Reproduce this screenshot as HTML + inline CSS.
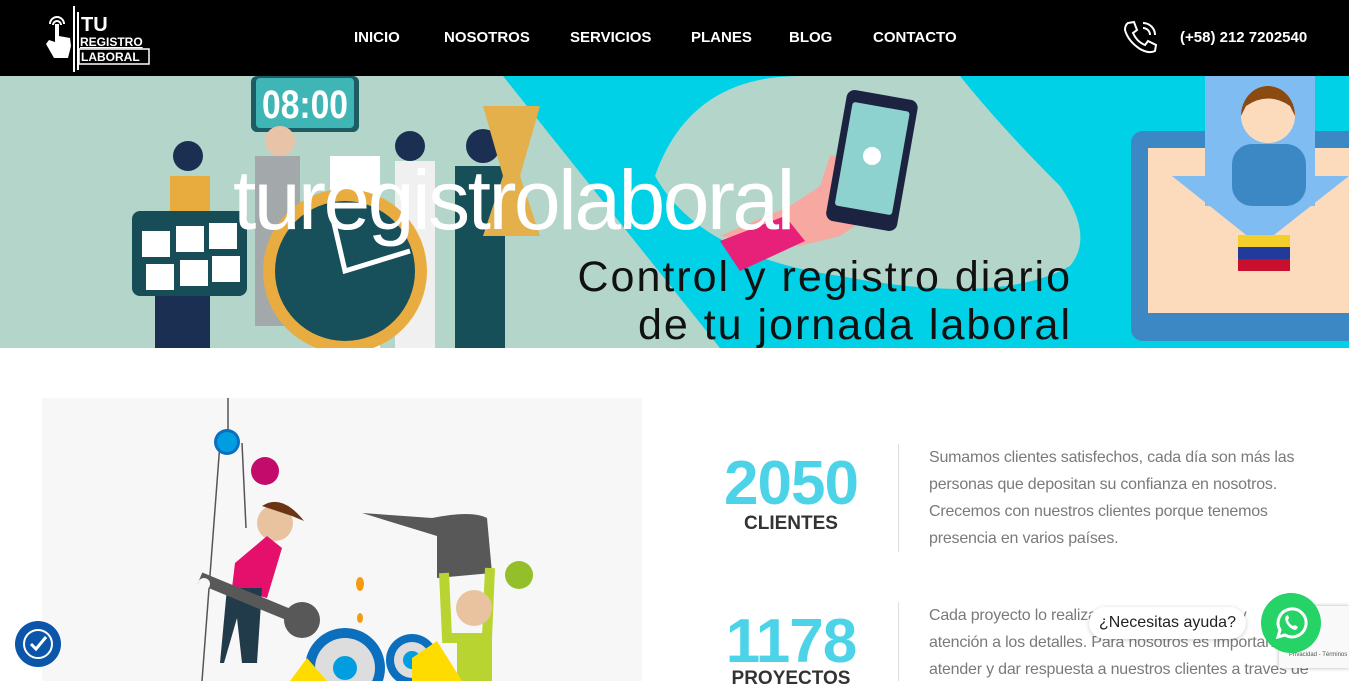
<!DOCTYPE html>
<html><head><meta charset="utf-8">
<style>
*{margin:0;padding:0;box-sizing:border-box}
body{width:1349px;height:681px;overflow:hidden;background:#fff;font-family:"Liberation Sans",sans-serif;position:relative}
.hdr{position:absolute;left:0;top:0;width:1349px;height:76px;background:#000}
.nav{position:absolute;top:29px;color:#fff;font-size:15px;font-weight:bold;letter-spacing:0}
.phone{position:absolute;left:1180px;top:29px;color:#fff;font-size:15px;font-weight:bold}
.banner{position:absolute;left:0;top:76px;width:1349px;height:272px;overflow:hidden;background:#b3d5ca}
.num{position:absolute;color:#4dd3e8;font-weight:bold;font-size:62px;text-align:center;width:200px;letter-spacing:-1px}
.lbl{position:absolute;color:#333;font-weight:bold;font-size:19px;text-align:center;width:200px}
.txt{position:absolute;left:929px;color:#7a7a7a;font-size:16px;line-height:27px;width:440px;white-space:nowrap;letter-spacing:-0.2px}
.vl{position:absolute;left:898px;width:1px;background:#ddd}
</style></head><body>
<div class="hdr">
 <svg style="position:absolute;left:44px;top:4px" width="110" height="70" viewBox="0 0 110 70">
  <path d="M6 20 a7 7 0 0 1 14 0" stroke="#fff" fill="none" stroke-width="2"/>
  <path d="M9 21 a4 4 0 0 1 8 0" stroke="#fff" fill="none" stroke-width="2"/>
  <path d="M11 20 L11 38 L5 36 L2 40 L10 54 L24 54 L27 42 L26 34 L15 32 L15 20 Z" fill="#fff"/>
  <rect x="29" y="2" width="2" height="66" fill="#fff"/>
  <rect x="33" y="8" width="2" height="58" fill="#fff"/>
  <text x="37" y="27" fill="#fff" font-weight="bold" font-size="20" font-family="Liberation Sans">TU</text>
  <text x="36" y="42" fill="#fff" font-weight="bold" font-size="12" font-family="Liberation Sans" text-decoration="underline">REGISTRO</text>
  <rect x="35" y="45" width="70" height="15" fill="none" stroke="#fff" stroke-width="1.5"/>
  <text x="37" y="57" fill="#fff" font-weight="bold" font-size="12" font-family="Liberation Sans">LABORAL</text>
 </svg>
 <div class="nav" style="left:354px">INICIO</div>
 <div class="nav" style="left:444px">NOSOTROS</div>
 <div class="nav" style="left:570px">SERVICIOS</div>
 <div class="nav" style="left:691px">PLANES</div>
 <div class="nav" style="left:789px">BLOG</div>
 <div class="nav" style="left:873px">CONTACTO</div>
 <svg style="position:absolute;left:1122px;top:19px" width="38" height="36" viewBox="0 0 38 36">
  <path d="M6 4 L12 3 L15 11 L11 14 Q15 23 23 26 L26 22 L34 26 L33 32 Q27 35 18 30 Q6 22 3 11 Q3 6 6 4Z" fill="none" stroke="#fff" stroke-width="2"/>
  <path d="M21 9 a7 7 0 0 1 7 7 M21 4 a12 12 0 0 1 12 12" fill="none" stroke="#fff" stroke-width="2"/>
 </svg>
 <div class="phone">(+58) 212 7202540</div>
</div>

<div class="banner">
 <svg width="1349" height="272" viewBox="0 0 1349 272" style="position:absolute;left:0;top:0">
  <polygon points="503,0 1349,0 1349,272 720,272" fill="#00d1e6"/>
  <path d="M655 100 Q690 0 800 0 L960 0 Q1000 50 1060 110 Q1095 160 1070 190 Q1000 230 840 200 Q700 180 655 100Z" fill="#b3d5ca"/>
  <rect x="251" y="0" width="108" height="56" rx="6" fill="#1e5c63"/>
  <rect x="256" y="2" width="98" height="50" rx="4" fill="#3fb6b5"/>
  <text x="262" y="42" fill="#fff" font-size="40" font-weight="bold" font-family="Liberation Sans" textLength="86" lengthAdjust="spacingAndGlyphs">08:00</text>
  <rect x="170" y="100" width="40" height="70" fill="#e7ab3e"/>
  <circle cx="188" cy="80" r="15" fill="#1b2f52"/>
  <rect x="155" y="190" width="55" height="82" fill="#1b2f52"/>
  <rect x="132" y="135" width="115" height="85" rx="8" fill="#174d56"/>
  <g fill="#fff"><rect x="142" y="155" width="28" height="26"/><rect x="176" y="150" width="28" height="26"/><rect x="209" y="147" width="28" height="26"/><rect x="146" y="188" width="28" height="26"/><rect x="180" y="184" width="28" height="26"/><rect x="212" y="180" width="28" height="26"/></g>
  <rect x="255" y="80" width="45" height="170" fill="#a3a9ab"/>
  <circle cx="280" cy="65" r="15" fill="#e9c3a7"/>
  <rect x="330" y="80" width="50" height="192" fill="#fff"/>
  <circle cx="410" cy="70" r="15" fill="#1b2f52"/>
  <rect x="395" y="85" width="40" height="187" fill="#f0f0f0"/>
  <rect x="455" y="90" width="50" height="182" fill="#164f58"/>
  <circle cx="483" cy="70" r="17" fill="#1b2f52"/>
  <path d="M483 30 L540 30 L520 100 L540 160 L483 160 L503 100Z" fill="#e4b04b"/>
  <circle cx="345" cy="195" r="82" fill="#e8ac40"/>
  <circle cx="345" cy="195" r="70" fill="#174f5a"/>
  <path d="M330 130 L345 195 L410 175" stroke="#fff" stroke-width="5" fill="none"/>
  <path d="M720 160 L790 130 L820 110 L830 80 L900 70 L900 120 L840 160 L800 170 Z" fill="#f7a8a0"/>
  <path d="M720 165 L785 140 L805 165 L740 195 Z" fill="#e7217a"/>
  <rect x="836" y="18" width="72" height="133" rx="8" transform="rotate(10 872 84)" fill="#1c2340"/>
  <rect x="843" y="30" width="58" height="105" rx="3" transform="rotate(10 872 84)" fill="#8ed2d0"/>
  <circle cx="872" cy="80" r="9" fill="#fff"/>
  <rect x="1131" y="55" width="230" height="210" rx="12" fill="#3c88c5"/>
  <rect x="1148" y="72" width="210" height="165" fill="#fcdbbd"/>
  <rect x="1205" y="0" width="110" height="130" fill="#7fbcf2"/>
  <polygon points="1172,100 1349,100 1260,170" fill="#7fbcf2"/>
  <circle cx="1268" cy="40" r="27" fill="#fcdbbd"/>
  <path d="M1241 40 a27 30 0 0 1 54 0 L1290 30 Q1268 15 1246 30Z" fill="#8a4a10"/>
  <rect x="1232" y="68" width="74" height="62" rx="20" fill="#3c88c5"/>
  <rect x="1238" y="159" width="52" height="12" fill="#f3cf2b"/>
  <rect x="1238" y="171" width="52" height="12" fill="#233a9d"/>
  <rect x="1238" y="183" width="52" height="12" fill="#c8102e"/>
 </svg>
 <div style="position:absolute;left:233px;top:82px;color:#fff;font-size:84px;letter-spacing:-2.5px;line-height:1">turegistrolaboral</div>
 <div style="position:absolute;left:540px;top:177px;color:#111;font-size:43px;line-height:48px;text-align:right;width:532px;letter-spacing:2px">Control y registro diario<br>de tu jornada laboral</div>
</div>

<div style="position:absolute;left:42px;top:398px;width:600px;height:283px;background:#f7f7f7;overflow:hidden">
 <svg width="600" height="283" viewBox="0 0 600 283">
  <path d="M186 0 L186 45 M178 45 L160 283 M200 45 L204 130" stroke="#555" stroke-width="1.5" fill="none"/>
  <circle cx="185" cy="44" r="13" fill="#0b6fbd"/><circle cx="185" cy="44" r="10" fill="#009ee0"/>
  <circle cx="223" cy="73" r="14" fill="#c30b6b"/>
  <circle cx="477" cy="177" r="14" fill="#93bf2a"/>
  <circle cx="233" cy="125" r="18" fill="#e9c3a0"/>
  <path d="M220 108 Q240 95 262 123 L250 118 Z" fill="#6b3415"/>
  <path d="M193 165 L225 138 L240 150 L225 200 L190 190Z" fill="#e5106b"/>
  <path d="M185 190 L220 190 L215 265 L200 265 L195 220 L182 265 L178 265Z" fill="#223b4b"/>
  <path d="M158 180 L255 220" stroke="#585858" stroke-width="12"/>
  <circle cx="260" cy="222" r="18" fill="#585858"/>
  <circle cx="162" cy="186" r="6" fill="#f7f7f7"/>
  <path d="M320 115 L395 138 L395 180 L450 175 L445 120 Q430 112 390 120Z" fill="#585858"/>
  <ellipse cx="318" cy="186" rx="4" ry="7" fill="#f39c12"/><ellipse cx="318" cy="220" rx="3" ry="5" fill="#f39c12"/>
  <path d="M402 175 L405 240 L445 240 L448 170" stroke="#b8d430" stroke-width="10" fill="none"/>
  <circle cx="432" cy="210" r="18" fill="#e9c3a0"/>
  <rect x="415" y="240" width="35" height="43" fill="#b8d430"/>
  <circle cx="303" cy="270" r="40" fill="#0b6fbd"/><circle cx="303" cy="270" r="30" fill="#ddd"/><circle cx="303" cy="270" r="12" fill="#009ee0"/>
  <circle cx="370" cy="262" r="26" fill="#0b6fbd"/><circle cx="370" cy="262" r="18" fill="#ddd"/><circle cx="370" cy="262" r="9" fill="#009ee0"/>
  <path d="M248 283 L265 260 L285 283Z M370 260 L395 243 L420 283 L370 283Z" fill="#ffdc00"/>
 </svg>
</div>

<div class="num" style="left:691px;top:448px">2050</div>
<div class="lbl" style="left:691px;top:513px">CLIENTES</div>
<div class="vl" style="top:444px;height:108px"></div>
<div class="txt" style="top:444px">Sumamos clientes satisfechos, cada día son más las<br>personas que depositan su confianza en nosotros.<br>Crecemos con nuestros clientes porque tenemos<br>presencia en varios países.</div>

<div class="num" style="left:691px;top:606px">1178</div>
<div class="lbl" style="left:691px;top:668px">PROYECTOS</div>
<div class="vl" style="top:602px;height:79px"></div>
<div class="txt" style="top:602px">Cada proyecto lo realizamos con dedicación y<br>atención a los detalles. Para nosotros es importante<br>atender y dar respuesta a nuestros clientes a traves de</div>

<div style="position:absolute;left:1279px;top:606px;width:70px;height:62px;background:#f9f9f9;box-shadow:0 0 4px rgba(0,0,0,.3)">
 <div style="position:absolute;left:10px;top:46px;font-size:6px;color:#555">Privacidad - Términos</div>
</div>
<div style="position:absolute;left:1089px;top:607px;width:157px;height:32px;border-radius:16px;background:#fff;box-shadow:0 1px 5px rgba(0,0,0,.2);font-size:16px;color:#222;line-height:32px;text-align:center">¿Necesitas ayuda?</div>
<svg style="position:absolute;left:1261px;top:593px" width="60" height="60" viewBox="0 0 60 60">
 <circle cx="30" cy="30" r="30" fill="#25d366"/>
 <path d="M17 44 L19 37 A14 14 0 1 1 24 42 Z" fill="none" stroke="#fff" stroke-width="3"/>
 <path d="M25 23 Q23 26 26 31 Q30 37 35 37 L37 34 L34 32 L32 33 Q28 31 27 27 L28 25 L27 22Z" fill="#fff"/>
</svg>
<svg style="position:absolute;left:15px;top:621px" width="46" height="46" viewBox="0 0 46 46">
 <circle cx="23" cy="23" r="23" fill="#0b56a8"/>
 <circle cx="23" cy="23" r="14" fill="none" stroke="#fff" stroke-width="2"/>
 <path d="M16 23 L21 28 L31 16" fill="none" stroke="#fff" stroke-width="3"/>
</svg>
</body></html>
